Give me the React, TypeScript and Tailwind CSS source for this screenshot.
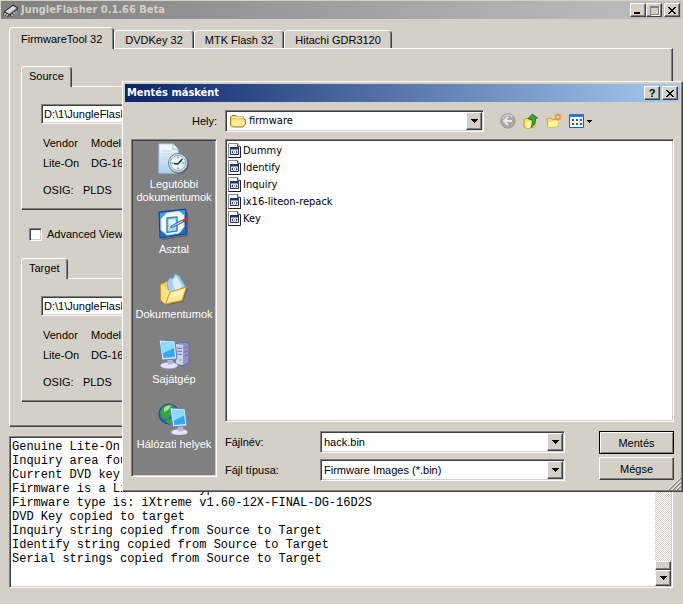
import React, { useState } from "react";

const raised =
  "bg-[#d4d0c8] border border-white border-r-[#404040] border-b-[#404040] shadow-[inset_-1px_-1px_0_#808080]";
const sunken =
  "bg-white border border-[#808080] border-r-white border-b-white shadow-[inset_1px_1px_0_#404040,inset_-1px_-1px_0_#d4d0c8]";
const panel =
  "border border-white border-r-[#404040] border-b-[#404040] shadow-[inset_-1px_-1px_0_#808080]";

const tabs = ["FirmwareTool 32", "DVDKey 32", "MTK Flash 32", "Hitachi GDR3120"];

const files = ["Dummy", "Identify", "Inquiry", "ix16-liteon-repack", "Key"];

const logLines = [
  "Genuine Lite-On Inquiry found",
  "Inquiry area found",
  "Current DVD key verified",
  "Firmware is a Lite-On DG type",
  "Firmware type is: iXtreme v1.60-12X-FINAL-DG-16D2S",
  "DVD Key copied to target",
  "Inquiry string copied from Source to Target",
  "Identify string copied from Source to Target",
  "Serial strings copied from Source to Target",
];

const ChipIcon = () => (
  <svg width="16" height="16" viewBox="0 0 16 16" aria-hidden="true">
    <path d="M1 10 10 3l5 3-8 7z" fill="#8c8c8c" stroke="#222" strokeWidth="1" />
    <path d="M2.500 9.500 10 4l3.500 2L6 11.500z" fill="#d8d8d8" />
    <path d="M1 11v2M3 12v2M5 13v2M8 12.500v2M10 11v2M12 9v2M14 7.500v2" stroke="#1a1a1a" strokeWidth="1" />
    <path d="M2 11v2M4 12v2M9 12v2M11 10v2M13 8.500v2" stroke="#eee" strokeWidth="1" />
  </svg>
);

const CloseGlyph = () => (
  <svg width="8" height="7" viewBox="0 0 8 7" shapeRendering="crispEdges" aria-hidden="true">
    <path d="M0 0h2v1h1v1h2v-1h1v-1h2v1h-1v1h-1v1h-1v1h1v1h1v1h1v1h-2v-1h-1v-1h-2v1h-1v1h-2v-1h1v-1h1v-1h1v-1h-1v-1h-1v-1h-1z" fill="#000" />
  </svg>
);

const DownArrow = () => (
  <svg width="7" height="4" viewBox="0 0 7 4" shapeRendering="crispEdges" aria-hidden="true">
    <path d="M0 0h7v1h-1v1h-1v1h-1v1h-1v-1h-1v-1h-1v-1h-1z" fill="#000" />
  </svg>
);

const FolderIcon = () => (
  <svg width="16" height="14" viewBox="0 0 16 14" aria-hidden="true">
    <path d="M.5 11V3L2 1.500h4L7.500 3H13l1 1v1.500h1.500V10L13 13H2.500z" fill="#f3cd58" stroke="#a8842a" />
    <path d="M2 5.500h12.500V10L12 12H3L2 11z" fill="#fdeb98" />
    <path d="M2 3.500h11" stroke="#fff6c4" />
  </svg>
);

const FileIcon = () => (
  <svg width="14" height="15" viewBox="0 0 14 15" aria-hidden="true">
    <path d="M.5.5h9l3 3v11H.5z" fill="#fff" stroke="#8a8a8a" />
    <path d="M9.500.5v3h3" fill="#ddd" stroke="#555" />
    <path d="M12.500 3.500v11H.5" fill="none" stroke="#222" />
    <path d="M2.500 4.500h8v7h-8z" fill="#fff" stroke="#26306e" />
    <path d="M2 4h9v2.500H2z" fill="#26306e" />
    <path d="m5 7.500-1 1.500 1 1.500M8 7.500 9 9l-1 1.500" fill="none" stroke="#222" />
    <path d="M6 9h1" stroke="#444" />
  </svg>
);

const RecentIcon = () => (
  <svg width="32" height="32" viewBox="0 0 32 32" aria-hidden="true">
    <defs>
      <linearGradient id="paper" x1="0" y1="0" x2="0" y2="1">
        <stop offset="0" stopColor="#f8fbff" />
        <stop offset="1" stopColor="#a4cdf2" />
      </linearGradient>
    </defs>
    <path d="M1 1h14l5 5v24H1z" fill="url(#paper)" stroke="#b4cdec" />
    <path d="M15 1v5h5" fill="#fff" stroke="#90aed6" />
    <path d="M4 8h9M4 11h12M4 14h8M4 17h6" stroke="#c3d8f0" />
    <circle cx="21" cy="21" r="10" fill="#333b48" opacity=".5" />
    <circle cx="20" cy="20" r="9.500" fill="#d3dae2" stroke="#71859b" />
    <circle cx="20" cy="20" r="7.500" fill="#e9f8fa" stroke="#96acc0" />
    <path d="M20 13.500v2M20 24.500v2M13.500 20h2M24.500 20h2" stroke="#667" />
    <path d="m24.500 16-4.500 5-4-.5" fill="none" stroke="#17324d" strokeWidth="1.600" />
  </svg>
);

const DesktopIcon = () => (
  <svg width="32" height="32" viewBox="0 0 32 32" aria-hidden="true">
    <path d="m3 31 25-4V4l2 1v23L5 32z" fill="#333" opacity=".4" />
    <path d="M1 4 28 1v25L2 30z" fill="#1f6fd0" stroke="#0d4396" />
    <path d="M2 5 27 2v6L2 13z" fill="#4a9aea" />
    <path d="m9 5 12-1.500 5 4V19l-5 6-12 2-6-5V11z" fill="#fffce0" stroke="#bfe4f8" />
    <path d="m9 10 10-1v14L9 24.500z" fill="#a9dcf8" stroke="#2c82cd" strokeWidth="1.400" />
    <path d="m11 12 6-.5v6L11 20z" fill="#e3f6fe" />
    <path d="m13 18 11-6 1.500 2-10 5-3 .5z" fill="#9cc0dc" stroke="#2a5d93" strokeWidth=".8" />
    <path d="m24 12 5-3 2 2-5 3.500z" fill="#b83a30" />
  </svg>
);

const DocumentsIcon = () => (
  <svg width="32" height="32" viewBox="0 0 32 32" aria-hidden="true">
    <path d="m8 32 17-3 5-13-2-2z" fill="#333" opacity=".35" />
    <path d="m2.500 11.500 6-3 4 2 11 0 1 14-17 6.500-5-4z" fill="#f4d061" stroke="#c0962c" />
    <path d="m9 10 3-5 3 .5L17 1l4 2 6 10-7 9-8 2z" fill="#a5d0f0" stroke="#7db0da" />
    <path d="m14 8 4-5 6 10-6 7z" fill="#d9effc" />
    <path d="m3 12 5 3 4 4-4.500 12L3 27z" fill="#fbe283" />
    <path d="m12 19 16.500-5L24 27.500 7.500 31z" fill="#fde88c" stroke="#c79b2c" />
    <path d="m13 20.500 13.500-4-2 5-13 3z" fill="#fff5b8" />
  </svg>
);

const Monitor = () => (
  <g>
    <ellipse cx="11" cy="27.500" rx="9" ry="3.500" fill="#e4e4f6" stroke="#8a8ab8" />
    <path d="m9 20 6 1v5l-5 1z" fill="#b4b6da" />
    <path d="M1 2 17 3l2 18-15 1z" fill="#d8e9f8" stroke="#5f7eb4" />
    <path d="m3 4 12.500 1 1.500 14-11.500 1z" fill="#34a5ee" />
    <path d="m3 4 12.500 1 .5 5-12 6z" fill="#8bdcff" />
  </g>
);

const ComputerIcon = () => (
  <svg width="32" height="32" viewBox="0 0 32 32" aria-hidden="true">
    <path d="m18 6 4-2 9 1v20l-7 3-6-2z" fill="#9395c6" stroke="#6668a0" />
    <path d="m18 6 7 1v20l-7-1z" fill="#d0d1ee" />
    <path d="m19 10 5 .5M19 13l5 .5M19 16l5 .5M26 10l4-1M26 14l4-1M26 18l4-1" stroke="#6c6eaa" />
    <circle cx="22.500" cy="22" r="1" fill="#62d862" />
    <Monitor />
  </svg>
);

const NetworkIcon = () => (
  <svg width="32" height="32" viewBox="0 0 32 32" aria-hidden="true">
    <circle cx="11" cy="11" r="10" fill="#2468c8" stroke="#164689" />
    <path d="M4 5c3-4 9-4 12-3l-2 3 2 4-4 3-2 5-6-2-2-5zM8 17l6-1 3 3-4 2c-3 0-5-1-5-4z" fill="#38a53c" />
    <path d="M6 5c2-2 5-3 7-2l-3 4-4 2z" fill="#a5e68c" />
    <g transform="translate(11 3) scale(.95)">
      <Monitor />
    </g>
  </svg>
);

const places = [
  { label: "Legutóbbi dokumentumok", icon: <RecentIcon /> },
  { label: "Asztal", icon: <DesktopIcon /> },
  { label: "Dokumentumok", icon: <DocumentsIcon /> },
  { label: "Sajátgép", icon: <ComputerIcon /> },
  { label: "Hálózati helyek", icon: <NetworkIcon /> },
];

const BackIcon = () => (
  <svg width="16" height="16" viewBox="0 0 16 16" aria-hidden="true">
    <circle cx="8" cy="8" r="7.200" fill="#aaa9a5" stroke="#979692" />
    <path d="M2.500 6a6 6 0 0 1 10-2" fill="none" stroke="#d0cfcb" strokeWidth="1.500" />
    <path d="M8 4 4 8l4 4M4.500 8H12" fill="none" stroke="#eceae6" strokeWidth="2" />
  </svg>
);

const UpIcon = () => (
  <svg width="16" height="16" viewBox="0 0 16 16" aria-hidden="true">
    <path d="M1 6.500 4 5l2 1.500h6V14l-8 1.500L1 14z" fill="#f7df6c" stroke="#c3a032" />
    <path d="m4 9 9-1.500-2 6.500-8 1.500z" fill="#fff3a4" />
    <path d="M5 5.500 9.500 1l5 4-2 .5c.5 4-1 7-4.500 9 1-3 1.500-5 .8-8z" fill="#35a52c" stroke="#176c18" strokeWidth=".8" />
  </svg>
);

const NewFolderIcon = () => (
  <svg width="16" height="16" viewBox="0 0 16 16" aria-hidden="true">
    <path d="M1 5.500 5 5l1 1.500 6-.5v7.500L2 14.500z" fill="#f6da66" stroke="#d0a83c" />
    <path d="m3 8.500 10-1-1.500 6-9.500 1z" fill="#fff2a0" />
    <path d="M12 .5v7M8.500 4h7M9.500 1.500l5 5M14.500 1.500l-5 5" stroke="#ef7b32" strokeWidth="1.200" />
    <circle cx="12" cy="4" r="1.500" fill="#ffe27a" />
  </svg>
);

const ViewsIcon = () => (
  <svg width="16" height="14" viewBox="0 0 16 14" aria-hidden="true">
    <path d="M.5.5h14v13H.5z" fill="#fff" stroke="#1c5cad" />
    <path d="M0 0h15v3H0z" fill="#2b74cf" />
    <path d="M3 5h2v2H3zM7 5h2v2H7zM11 5h2v2h-2zM3 9h2v2H3zM7 9h2v2H7zM11 9h2v2h-2z" fill="#315b9c" />
  </svg>
);

const GripIcon = () => (
  <svg width="12" height="12" viewBox="0 0 12 12" aria-hidden="true">
    <path d="M0 12 12 0M4 12l8-8M8 12l4-4" stroke="#808080" strokeWidth="1.500" />
    <path d="M-1 12 12-1M3 12l9-9M7 12l5-5" stroke="#fff" strokeWidth=".8" />
  </svg>
);

interface FirmwareGroupProps {
  title: string;
  id: string;
  className: string;
}

const FirmwareGroup = ({ title, id, className }: FirmwareGroupProps) => (
  <section className={className}>
    <h2 className="relative -mb-px h-[21px] w-fit rounded-t-sm border-t border-l border-r border-white border-r-[#404040] bg-[#d4d0c8] px-[7px] leading-[19px] shadow-[inset_-1px_0_0_#808080]">
      {title}
    </h2>
    <div className={`${panel} px-[19px] pt-[17px] pb-3`}>
      <input
        id={id}
        aria-label={`${title} file`}
        readOnly
        value="D:\1\JungleFlasher\firmware"
        className={`${sunken} block h-5 w-full px-0.5 outline-none`}
      />
      <div className="pl-0.5">
        <div className="mt-3 flex">
          <span className="w-12">Vendor</span>
          <span>Model</span>
        </div>
        <div className="mt-1.5 flex">
          <span className="w-12">Lite-On</span>
          <span>DG-16D2S</span>
        </div>
        <div className="mt-[13px] flex">
          <span className="w-10">OSIG:</span>
          <span>PLDS</span>
        </div>
      </div>
    </div>
  </section>
);

const SaveDialog = () => {
  const [fileName, setFileName] = useState("hack.bin");

  return (
    <div
      role="dialog"
      aria-label="Mentés másként"
      className={`${panel} absolute top-20 right-0 left-[122px] bg-[#d4d0c8] p-0.5 pb-2.5`}>
      <div className="flex h-[18px] items-center bg-linear-to-r/srgb from-[#0a246a] to-[#a6caf0] px-0.5">
        <h1 className="flex-1 font-['DejaVu_Sans_Condensed',sans-serif] text-[11px] font-bold text-white">Mentés másként</h1>
        <button aria-label="Súgó" className={`${raised} flex h-3.5 w-4 items-center justify-center font-bold`}>?</button>
        <button aria-label="Bezárás" className={`${raised} ml-0.5 flex h-3.5 w-4 items-center justify-center`}>
          <CloseGlyph />
        </button>
      </div>

      <div className="mt-2 flex h-[22px] items-center pl-1.5">
        <label htmlFor="folder" className="w-[86px] text-right">Hely:</label>
        <div className={`${sunken} relative ml-2 flex h-[22px] w-[259px] items-center p-px`}>
          <span className="pointer-events-none absolute left-1">
            <FolderIcon />
          </span>
          <select
            id="folder"
            className="h-full w-full appearance-none pl-[22px] font-['DejaVu_Sans_Condensed',sans-serif] outline-none">
            <option>firmware</option>
          </select>
          <span className={`${raised} pointer-events-none absolute top-px right-px bottom-px flex w-4 items-center justify-center`}>
            <DownArrow />
          </span>
        </div>
        <div className="ml-4 flex items-center gap-[7px]">
          <button aria-label="Vissza"><BackIcon /></button>
          <button aria-label="Egy szinttel feljebb"><UpIcon /></button>
          <button aria-label="Új mappa"><NewFolderIcon /></button>
          <button aria-label="Nézetek" className="flex items-center gap-0.5">
            <ViewsIcon />
            <svg width="5" height="3" viewBox="0 0 5 3" shapeRendering="crispEdges" aria-hidden="true">
              <path d="M0 0h5v1h-1v1h-1v1h-1v-1h-1v-1h-1z" fill="#000" />
            </svg>
          </button>
        </div>
      </div>

      <div className="mt-[7px] flex items-start gap-2 pr-1.5 pl-1.5">
        <nav className="w-[86px] shrink-0 border border-[#808080] border-r-white border-b-white bg-[#808080] pt-[3px] pb-2 shadow-[inset_1px_1px_0_#404040,inset_-1px_-1px_0_#d4d0c8]">
          {places.map((place) => (
            <button key={place.label} className="flex h-[65px] w-full flex-col items-center gap-[3px] leading-[13px] text-white">
              {place.icon}
              <span className="w-20">{place.label}</span>
            </button>
          ))}
        </nav>

        <div className="flex-1">
          <ul className={`${sunken} h-[283px] pt-0.5 pl-0.5 font-['DejaVu_Sans_Condensed',sans-serif]`}>
            {files.map((file) => (
              <li key={file} className="flex h-[17px] items-center gap-px">
                <FileIcon />
                {file}
              </li>
            ))}
          </ul>

          <div className="mt-[9px] flex justify-between">
            <div>
              <div className="flex h-[22px] items-center">
                <label htmlFor="file-name" className="w-[95px]">Fájlnév:</label>
                <div className={`${sunken} flex h-[22px] w-[245px] p-px`}>
                  <input
                    id="file-name"
                    value={fileName}
                    onChange={(e) => setFileName(e.target.value)}
                    className="min-w-0 flex-1 pl-0.5 outline-none"
                  />
                  <button aria-label="Korábbi nevek" className={`${raised} flex w-4 items-center justify-center`}>
                    <DownArrow />
                  </button>
                </div>
              </div>
              <div className="mt-1.5 flex h-[22px] items-center">
                <label htmlFor="file-type" className="w-[95px]">Fájl típusa:</label>
                <div className={`${sunken} relative h-[22px] w-[245px] p-px`}>
                  <select id="file-type" className="block h-full w-full appearance-none pl-0.5 outline-none">
                    <option>Firmware Images (*.bin)</option>
                  </select>
                  <span className={`${raised} pointer-events-none absolute top-px right-px bottom-px flex w-4 items-center justify-center`}>
                    <DownArrow />
                  </span>
                </div>
              </div>
            </div>
            <div className="flex w-[75px] flex-col gap-[3px]">
              <button className="h-[23px] border border-black bg-[#d4d0c8] shadow-[inset_1px_1px_0_#fff,inset_-1px_-1px_0_#808080]">Mentés</button>
              <button className={`${raised} h-[23px]`}>Mégse</button>
            </div>
          </div>
        </div>
      </div>
      <span className="absolute right-px bottom-px">
        <GripIcon />
      </span>
    </div>
  );
};

const App = () => {
  const [advanced, setAdvanced] = useState(false);

  return (
    <div className="relative flex min-h-screen flex-col border-t border-b border-[#d4d0c8] border-b-white bg-[#d4d0c8] font-['Liberation_Sans',Arial,sans-serif] text-[11px] leading-[14px] text-black">
      <header className="mx-px flex h-[18px] items-center bg-linear-to-r/srgb from-[#808080] to-[#c0c0c0] px-0.5">
        <ChipIcon />
        <h1 className="ml-0.5 flex-1 font-['DejaVu_Sans_Condensed',sans-serif] font-bold text-[#d4d0c8]">JungleFlasher 0.1.66 Beta</h1>
        <button aria-label="Minimize" className={`${raised} flex h-3.5 w-4 items-end justify-center pb-0.5`}>
          <span className="mr-0.5 h-0.5 w-1.5 bg-black" />
        </button>
        <button aria-label="Maximize" disabled className={`${raised} flex h-3.5 w-4 items-center justify-center`}>
          <span className="h-[9px] w-[9px] border border-t-2 border-[#808080] shadow-[1px_1px_0_#fff]" />
        </button>
        <button aria-label="Close" className={`${raised} ml-0.5 flex h-3.5 w-4 items-center justify-center`}>
          <CloseGlyph />
        </button>
      </header>

      <div className="mr-2.5 ml-[9px] mt-2">
        <div role="tablist" className="flex items-end">
          {tabs.map((tab, index) => (
            <button
              key={tab}
              role="tab"
              aria-selected={index === 0}
              className={`rounded-t-sm border-t border-l border-r border-white border-r-[#404040] bg-[#d4d0c8] shadow-[inset_-1px_0_0_#808080] ${
                index === 0 ? "relative -mb-px h-[22px] px-[11px]" : "h-[18px] px-2.5"
              }`}>
              {tab}
            </button>
          ))}
        </div>
        <main className={`${panel} px-[11px] pt-[17px] pb-6`}>
          <FirmwareGroup title="Source" id="source-file" className="" />
          <label className="mt-[17px] flex h-3.5 w-fit items-center gap-[5px] pl-2">
            <input
              type="checkbox"
              checked={advanced}
              onChange={(e) => setAdvanced(e.target.checked)}
              className={`${sunken} h-[13px] w-[13px] appearance-none checked:bg-[#0a246a]`}
            />
            Advanced View
          </label>
          <FirmwareGroup title="Target" id="target-file" className="mt-[17px]" />
        </main>
      </div>

      <div className={`${sunken} mr-2.5 ml-[9px] mt-[9px] mb-4 flex flex-1 p-px`}>
        <textarea
          aria-label="Log"
          readOnly
          value={logLines.join("\n")}
          className="block flex-1 resize-none overflow-hidden pt-0.5 pl-px font-['Liberation_Mono',monospace] text-[12px] leading-[14px] outline-none"
        />
        <div className="flex w-4 flex-col bg-[conic-gradient(#d4d0c8_25%,#fff_0_50%,#d4d0c8_0_75%,#fff_0)] bg-[length:2px_2px]">
          <button aria-label="Scroll up" className={`${raised} flex h-4 items-center justify-center`}>
            <span className="rotate-180">
              <DownArrow />
            </span>
          </button>
          <div className="flex-1" />
          <div className={`${raised} h-[9px]`} />
          <button aria-label="Scroll down" className={`${raised} flex h-4 items-center justify-center`}>
            <DownArrow />
          </button>
        </div>
      </div>

      <SaveDialog />
    </div>
  );
};

export default App;
